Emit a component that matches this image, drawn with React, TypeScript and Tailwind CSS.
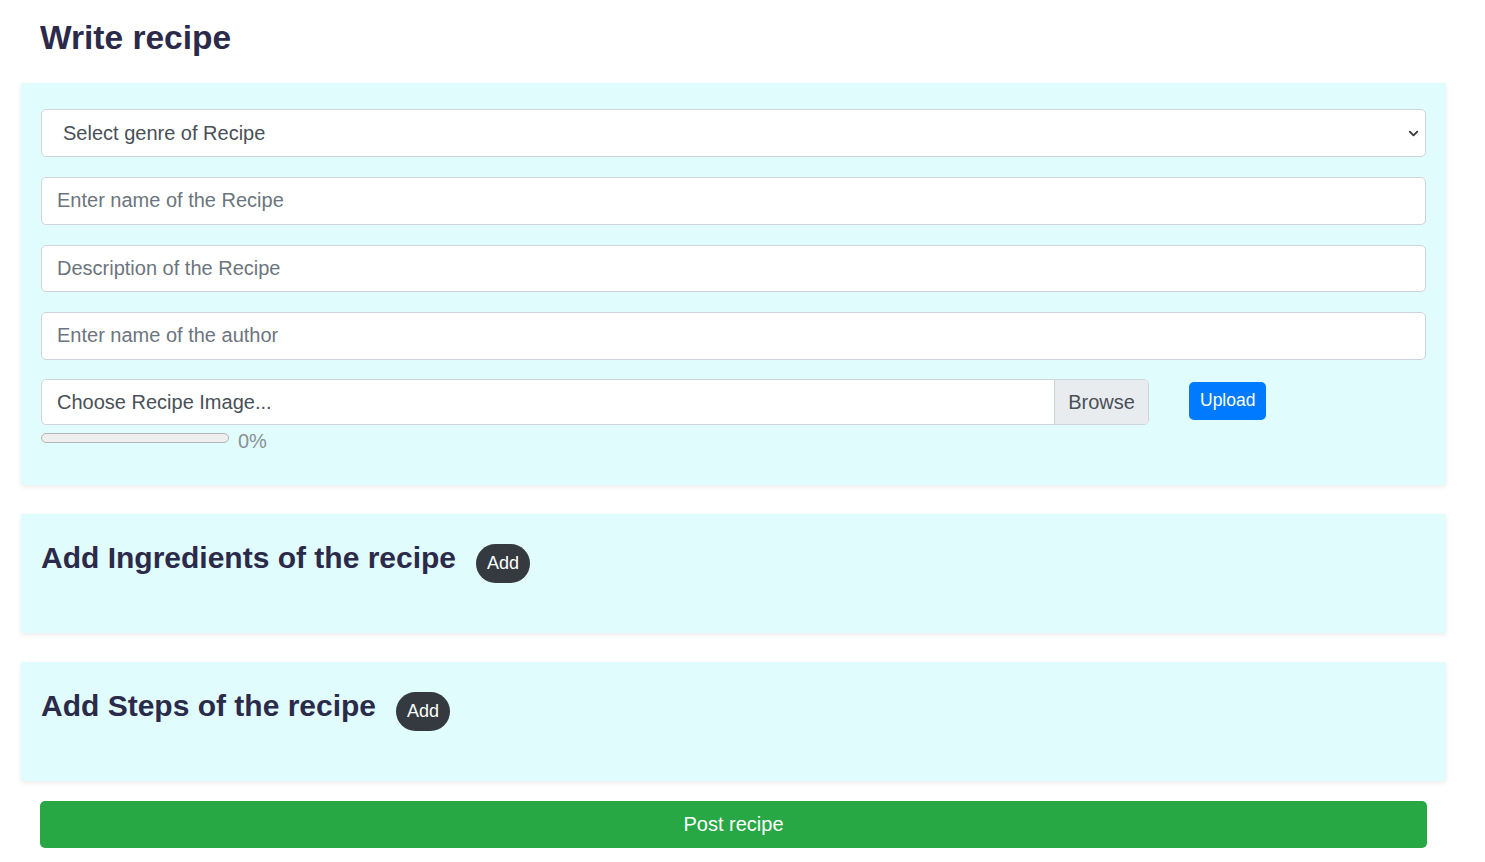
import { ChevronDown } from 'lucide-react';

const font = { fontFamily: '"Liberation Sans", Arial, sans-serif' };

function TextField({ placeholder }: { placeholder: string }) {
  return (
    <input
      type="text"
      placeholder={placeholder}
      className="block w-full h-[47.5px] px-[15px] bg-white border border-[#ced4da] rounded-[5px] text-[20px] text-[#495057] placeholder:text-[#6c757d] outline-none"
    />
  );
}

function Section({ title }: { title: string }) {
  return (
    <div className="ml-[21px] mr-[39px] mt-[29px] bg-[#e0fcfc] shadow-[0_2px_5px_rgba(0,0,0,0.08)] px-[20px] pt-[20px] h-[119px]">
      <div className="flex items-center gap-[20px]">
        <h2 className="text-[30px] leading-[36px] font-bold text-[#2c2a4a]">{title}</h2>
        <button className="mt-[10px] h-[39px] px-[11px] rounded-full bg-[#343a40] text-white text-[18px] leading-none">
          Add
        </button>
      </div>
    </div>
  );
}

export default function App() {
  return (
    <div className="min-h-screen bg-white" style={font}>
      <h1 className="pl-[40px] pt-[18px] text-[33.5px] leading-[40px] font-bold text-[#2c2a4a]">Write recipe</h1>

      {/* Main form */}
      <div className="ml-[21px] mr-[39px] mt-[25px] bg-[#e0fcfc] shadow-[0_2px_5px_rgba(0,0,0,0.08)] px-[20px] pt-[26px] pb-[34px]">
        <div className="relative">
          <select className="block w-full h-[48px] pl-[21px] pr-[40px] appearance-none bg-white border border-[#ced4da] rounded-[5px] text-[20px] text-[#495057] outline-none">
            <option>Select genre of Recipe</option>
          </select>
          <ChevronDown className="absolute right-[5px] top-[17px] w-[15px] h-[15px] text-[#343a40]" strokeWidth={3} />
        </div>

        <div className="mt-[20px] flex flex-col gap-[20px]">
          <TextField placeholder="Enter name of the Recipe" />
          <TextField placeholder="Description of the Recipe" />
          <TextField placeholder="Enter name of the author" />
        </div>

        <div className="mt-[19px] flex items-start">
          <div className="w-[1108px] h-[46px] flex bg-white border border-[#ced4da] rounded-[5px] overflow-hidden text-[20px] text-[#495057]">
            <div className="flex-1 flex items-center px-[15px]">Choose Recipe Image...</div>
            <div className="w-[94px] flex items-center justify-center bg-[#e9ecef] border-l border-[#ced4da]">Browse</div>
          </div>
          <button className="ml-[40px] mt-[3px] h-[38px] px-[11px] rounded-[5px] bg-[#007bff] text-white text-[17.5px]">
            Upload
          </button>
        </div>

        <div className="mt-[8px] flex items-start gap-[9px]">
          <div className="w-[188px] h-[10px] rounded-full bg-[#efefef] border border-[#b5b5b5]" />
          <span className="-mt-[2px] text-[20px] leading-[20px] text-[#8a9096]">0%</span>
        </div>
      </div>

      <Section title="Add Ingredients of the recipe" />
      <Section title="Add Steps of the recipe" />

      <div className="px-[40px] pr-[58px] mt-[20px] pb-[14px]">
        <button className="w-full h-[47px] rounded-[5px] bg-[#28a745] text-white text-[20px]">Post recipe</button>
      </div>
    </div>
  );
}
